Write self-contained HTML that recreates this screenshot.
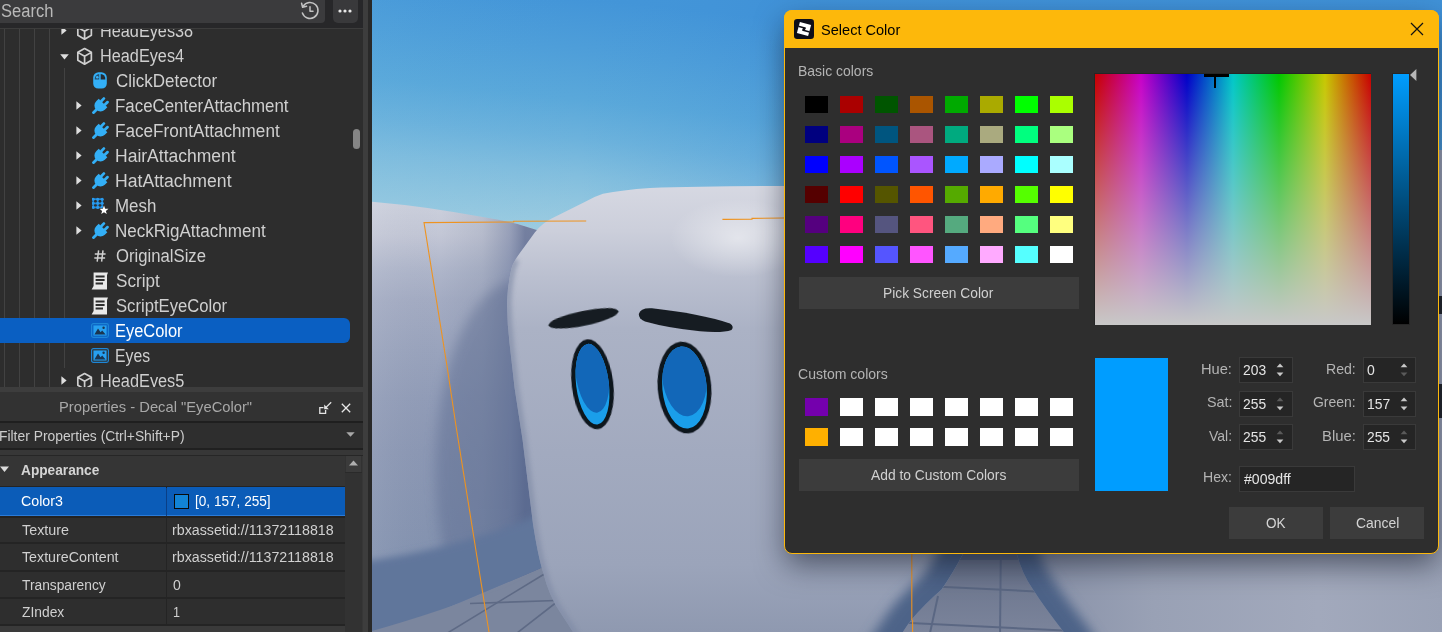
<!DOCTYPE html>
<html lang="en"><head><meta charset="utf-8"><title>Select Color</title>
<style>
*{margin:0;padding:0;box-sizing:border-box}
html,body{width:1442px;height:632px;overflow:hidden;background:#3d3d3d;font-family:"Liberation Sans",sans-serif}
.abs{position:absolute}
.t{position:absolute;white-space:pre;line-height:normal;transform-origin:0 0;display:inline-block}
#left{position:absolute;left:0;top:0;width:372px;height:632px;background:#3d3d3d;overflow:hidden}
#tree{position:absolute;left:0;top:29px;width:363px;height:358px;background:#2d2d2d;overflow:hidden}
#dlg{position:absolute;left:784px;top:10px;width:655px;height:544px;background:#2e2e2e;border:1px solid #fdb80b;border-radius:8px;box-shadow:0 12px 30px -2px rgba(8,12,28,.55);overflow:hidden}
.btn{position:absolute;background:#3c3c3c}
.sw{position:absolute;width:23px;height:17px}
.spin{position:absolute;width:54px;height:26px;background:#252525;border:1px solid #3a3a3a}
</style></head>
<body>
<svg class="abs" style="left:372px;top:0" width="1070" height="632" viewBox="372 0 1070 632">
<defs>
<linearGradient id="sky" gradientUnits="userSpaceOnUse" x1="600" y1="0" x2="574" y2="240">
<stop offset="0" stop-color="#4395d8"/><stop offset=".21" stop-color="#4e9ed9"/><stop offset=".42" stop-color="#5aa8da"/><stop offset=".58" stop-color="#6cb2dc"/><stop offset=".73" stop-color="#82bede"/><stop offset=".84" stop-color="#8fc5df"/><stop offset="1" stop-color="#a0cee1"/>
</linearGradient>
<linearGradient id="skyx" gradientUnits="userSpaceOnUse" x1="372" y1="0" x2="784" y2="0">
<stop offset="0" stop-color="#5fb0e0" stop-opacity=".12"/><stop offset=".5" stop-color="#4a9ddc" stop-opacity="0"/><stop offset="1" stop-color="#2f7fd6" stop-opacity=".15"/>
</linearGradient>
<linearGradient id="lb" gradientUnits="userSpaceOnUse" x1="0" y1="200" x2="0" y2="560">
<stop offset="0" stop-color="#cdd1dd"/><stop offset=".1" stop-color="#c2c6d5"/><stop offset=".19" stop-color="#afb6ca"/><stop offset=".28" stop-color="#a3abc2"/><stop offset=".42" stop-color="#99a3bc"/><stop offset=".55" stop-color="#919cb7"/><stop offset=".7" stop-color="#8b97b3"/><stop offset="1" stop-color="#8392af"/>
</linearGradient>
<linearGradient id="lbx" gradientUnits="userSpaceOnUse" x1="372" y1="0" x2="525" y2="0">
<stop offset="0" stop-color="#ffffff" stop-opacity=".07"/><stop offset=".45" stop-color="#65738f" stop-opacity="0"/><stop offset=".72" stop-color="#65738f" stop-opacity=".14"/><stop offset=".9" stop-color="#596890" stop-opacity=".42"/><stop offset="1" stop-color="#4e5d86" stop-opacity=".68"/>
</linearGradient>
<linearGradient id="hd" gradientUnits="userSpaceOnUse" x1="0" y1="186" x2="0" y2="632">
<stop offset="0" stop-color="#d6d8e2"/><stop offset=".1" stop-color="#cccfdb"/><stop offset=".2" stop-color="#bbc0d0"/><stop offset=".32" stop-color="#abb2c5"/><stop offset=".6" stop-color="#a2aabf"/><stop offset=".85" stop-color="#9ba4ba"/><stop offset="1" stop-color="#8f99b0"/>
</linearGradient>
<radialGradient id="hl" gradientUnits="userSpaceOnUse" cx="738" cy="238" r="68" gradientTransform="translate(0 99.960) scale(1 .58)">
<stop offset="0" stop-color="#ffffff" stop-opacity=".48"/><stop offset="1" stop-color="#ffffff" stop-opacity="0"/>
</radialGradient>
<linearGradient id="ro" gradientUnits="userSpaceOnUse" x1="1030" y1="0" x2="1442" y2="0">
<stop offset="0" stop-color="#8891a8"/><stop offset=".3" stop-color="#99a1b5"/><stop offset=".7" stop-color="#a2a9bc"/><stop offset="1" stop-color="#9aa2b6"/>
</linearGradient>
<linearGradient id="fl" gradientUnits="userSpaceOnUse" x1="0" y1="554" x2="0" y2="632">
<stop offset="0" stop-color="#677189"/><stop offset="1" stop-color="#7b849b"/>
</linearGradient>
<filter id="b2" x="-60%" y="-60%" width="220%" height="220%"><feGaussianBlur stdDeviation="2"/></filter>
<filter id="b3" x="-60%" y="-60%" width="220%" height="220%"><feGaussianBlur stdDeviation="3.500"/></filter>
<filter id="b6" x="-60%" y="-60%" width="220%" height="220%"><feGaussianBlur stdDeviation="6"/></filter>
<filter id="b1"><feGaussianBlur stdDeviation=".6"/></filter>
<clipPath id="cpLB"><path d="M372 201.700 L404.600 205 Q430 208 453.500 212 L498.500 219.700 L517.500 224 L540 231 L560 560 L372 640 Z"/></clipPath>
<path id="hdp" d="M1000 186 L784 186 Q700 186.300 650 188 Q622 190 603 193.700 Q596 196 587.700 200.400 L568.700 209.900 L551.600 218.400 Q545 222 542 225 Q538 228 534.600 232.700 L525 246 Q519 254 515.600 259.200 Q512.500 264 511.400 268.700 Q507.600 285 507 302.700 Q507.200 325 509.800 345.400 L514.600 388 L522.600 440 L533 524 Q538 556 543 572 Q549 596 560 612 Q568 624 578 640 L898 640 Q905 628 911.600 619.600 Q925 604 941.600 589.600 Q953 573 963.500 553 L1000 553 Z"/>
<clipPath id="cpHD"><use href="#hdp"/></clipPath>
<clipPath id="cpRO"><path id="rop" d="M1016.500 553 Q1022 574 1033 589.600 Q1046 610 1070 640 L1442 640 L1442 150 L1016.500 150 Z"/></clipPath>
<clipPath id="cpE1"><ellipse cx="592.500" cy="384.200" rx="16.400" ry="40.600"/></clipPath>
<clipPath id="cpE2"><ellipse cx="684.500" cy="387.500" rx="22.200" ry="41.200"/></clipPath>
</defs>
<!-- sky -->
<rect x="372" y="0" width="1070" height="632" fill="url(#sky)"/>
<rect x="372" y="0" width="1070" height="240" fill="url(#skyx)"/>
<!-- floor -->
<rect x="372" y="480" width="230" height="152" fill="#7b869e"/>
<rect x="880" y="540" width="220" height="92" fill="url(#fl)"/>
<rect x="960" y="553" width="60" height="7" fill="#566380" filter="url(#b1)"/>
<g stroke="#586581" stroke-width="2" fill="none" opacity=".9">
<path d="M1000.800 553 L1000 640"/><path d="M940 586.800 L1036 591.500"/><path d="M900 622.500 L1064 630.500"/><path d="M938 596 L928.500 640"/>
</g>
<!-- left block -->
<g clip-path="url(#cpLB)">
<rect x="372" y="190" width="200" height="450" fill="url(#lb)"/>
<rect x="372" y="190" width="200" height="450" fill="url(#lbx)"/>
<ellipse cx="520" cy="470" rx="85" ry="190" fill="#56668c" opacity=".42" filter="url(#b6)"/>
<!-- dark band -->
<path d="M360 562 Q460 549 545 512 L560 600 L360 660 Z" fill="#61769b" filter="url(#b3)"/>
</g>
<!-- floor wedge bottom-left over the block -->
<path d="M372 631 Q404 622 440 610 Q480 596 502 589 Q524 579 545 566 L575 640 L372 640 Z" fill="#7b869e"/>
<g stroke="#5e6a85" stroke-width="1.600" fill="none">
<path d="M436 640 L546 573"/><path d="M470 603.500 L556 600.500"/><path d="M508 640 L562 598"/>
</g>
<!-- right object under dialog -->
<g clip-path="url(#cpRO)">
<rect x="1000" y="150" width="450" height="500" fill="url(#ro)"/>
<path d="M1010 530 L1016.500 553 Q1022 574 1033 589.600 Q1046 610 1070 640 L1080 655" fill="none" stroke="#4d6388" stroke-width="44" filter="url(#b6)"/>
</g>
<!-- head -->
<g clip-path="url(#cpHD)">
<rect x="372" y="150" width="640" height="500" fill="url(#hd)"/>
<ellipse cx="738" cy="238" rx="80" ry="46" fill="url(#hl)"/>
<!-- left rim shading -->
<path d="M515.600 259.200 Q512.500 264 511.400 268.700 Q507.600 285 507 302.700 Q507.200 325 509.800 345.400 L514.600 388 L522.600 440 L533 524 Q538 556 543 572 Q549 596 560 612 Q568 624 578 640" fill="none" stroke="#7f8aa5" stroke-width="9" opacity=".6" filter="url(#b2)"/>
<!-- bottom right rim -->
<path d="M884 660 Q905 628 911.600 619.600 Q925 604 941.600 589.600 Q953 573 963.500 553 L975 530" fill="none" stroke="#4d6388" stroke-width="46" filter="url(#b6)"/>
<path d="M560 648 L880 648" stroke="#7f8aa3" stroke-width="30" opacity=".45" filter="url(#b3)"/>
</g>
<!-- eyebrows -->
<ellipse cx="583.500" cy="318.300" rx="35.600" ry="7.400" fill="#161b21" transform="rotate(-11.500 583.500 318.300)" filter="url(#b1)"/>
<path d="M638.800 314 Q640.500 307.500 652 308.300 Q700 313.500 730 323.500 Q734.500 326.500 731.500 330 Q722 333.300 700 331.300 Q668 328 645 321.500 Q638.500 318.500 638.800 314 Z" fill="#161b21" filter="url(#b1)"/>
<!-- eyes -->
<g transform="rotate(-7 592.500 384.200)">
<ellipse cx="592.500" cy="384.200" rx="20.800" ry="45.200" fill="#10141c" filter="url(#b1)"/>
<g clip-path="url(#cpE1)"><rect x="560" y="330" width="70" height="110" fill="#1a9eea"/>
<ellipse cx="593.600" cy="371.500" rx="16.800" ry="41.500" fill="#1267b8"/></g>
</g>
<g transform="rotate(-5 684.500 387.500)">
<ellipse cx="684.500" cy="387.500" rx="26.800" ry="46" fill="#10141c" filter="url(#b1)"/>
<g clip-path="url(#cpE2)"><rect x="650" y="330" width="70" height="110" fill="#1a9eea"/>
<ellipse cx="685.600" cy="374" rx="22.600" ry="42.500" fill="#1267b8"/></g>
</g>
<!-- selection outline -->
<g stroke="#ee9320" stroke-width="1.100" fill="none">
<path d="M586.200 221 L513.700 221.300 L513.700 222 L424 222.600 L447 366 L456 426 L489 632"/>
<path d="M722.400 219.400 L752 219.200 L752 218.400 L784 218"/>
<path d="M911.800 554 V620 M912.600 620 V632"/>
</g>
<!-- right strip marks -->
<rect x="1439" y="296" width="3" height="18" fill="#23262c"/>
<rect x="1439" y="384" width="3" height="34" fill="#23262c"/>
</svg>

<div id="left">
<div class="abs" style="left:0px;top:0px;width:363px;height:29px;background:#272729;"></div>
<div class="abs" style="left:0px;top:0px;width:325px;height:23px;background:#3b3b3d;border-radius:0 0 4px 0"></div>
<div class="abs" style="left:333px;top:0px;width:25px;height:23px;background:#39393b;border-radius:0 0 5px 5px"></div>
<div class="abs" style="left:0px;top:28px;width:363px;height:1px;background:#3c3c3c;"></div>
<svg class="abs" style="left:299px;top:0px" width="22" height="22" viewBox="0 0 22 22"><g fill="none" stroke="#c4c4c4" stroke-width="1.5" stroke-linecap="round" stroke-linejoin="round"><path d="M4.2 6.2 A8 8 0 1 1 3.4 13"/><path d="M2.6 3.2 L3.6 7.3 L7.6 6.2"/><path d="M11 6.8 V11.2 H14"/></g></svg>
<svg class="abs" style="left:337px;top:8px" width="16" height="6" viewBox="0 0 16 6"><circle cx="3" cy="3" r="1.6" fill="#e8e8e8"/><circle cx="8" cy="3" r="1.6" fill="#e8e8e8"/><circle cx="13" cy="3" r="1.6" fill="#e8e8e8"/></svg>
<div id="tree">
<div class="abs" style="left:4px;top:0px;width:1px;height:359px;background:#424242;"></div>
<div class="abs" style="left:19px;top:0px;width:1px;height:359px;background:#424242;"></div>
<div class="abs" style="left:34px;top:0px;width:1px;height:359px;background:#424242;"></div>
<div class="abs" style="left:49px;top:0px;width:1px;height:359px;background:#424242;"></div>
<div class="abs" style="left:64px;top:39px;width:1px;height:300px;background:#424242;"></div>
<div class="abs" style="left:0px;top:289px;width:350px;height:25px;background:#0a5fc2;border-radius:0 6px 6px 0"></div>
<svg class="abs" style="left:61.2px;top:-2.8px" width="6" height="9" viewBox="0 0 6 9"><path d="M0.4 0.3 L5.6 4.5 L0.4 8.7 Z" fill="#dedede"/></svg>
<svg class="abs" style="left:76.4px;top:-7.4px" width="17.2" height="18.8" viewBox="0 0 18 20"><path d="M9 1.6 L16.2 5.7 V14.1 L9 18.3 L1.8 14.1 V5.7 Z M1.8 5.7 L9 9.9 L16.2 5.7 M9 9.9 V18.3" fill="none" stroke="#cfcfcf" stroke-width="1.8" stroke-linejoin="round" stroke-linecap="round"/></svg>
<svg class="abs" style="left:59.5px;top:24.5px" width="9" height="6" viewBox="0 0 9 6"><path d="M0.2 0.3 H8.8 L4.5 5.6 Z" fill="#dedede"/></svg>
<svg class="abs" style="left:76.4px;top:17.6px" width="17.2" height="18.8" viewBox="0 0 18 20"><path d="M9 1.6 L16.2 5.7 V14.1 L9 18.3 L1.8 14.1 V5.7 Z M1.8 5.7 L9 9.9 L16.2 5.7 M9 9.9 V18.3" fill="none" stroke="#cfcfcf" stroke-width="1.8" stroke-linejoin="round" stroke-linecap="round"/></svg>
<svg class="abs" style="left:92.5px;top:42.900000000000006px" width="14" height="17" viewBox="0 0 14 17"><path d="M0.2 5.6 A5.4 5.4 0 0 1 5.6 0.2 H8.4 A5.4 5.4 0 0 1 13.800 5.6 V11.600 A5 5 0 0 1 8.800 16.600 H5.2 A5 5 0 0 1 0.2 11.600 Z" fill="#33aff6"/><path d="M7.700 1.900 A4.600 5.200 0 0 1 12.300 7.600 H7.700 Z" fill="#252b33"/><path d="M6.200 1.900 A4.600 5.200 0 0 0 1.700 7.600 H6.200 Z" fill="#27506f"/><circle cx="4.300" cy="5.300" r="1.300" fill="#39b4f8"/></svg>
<svg class="abs" style="left:76.2px;top:72.2px" width="6" height="9" viewBox="0 0 6 9"><path d="M0.4 0.3 L5.6 4.5 L0.4 8.7 Z" fill="#dedede"/></svg>
<svg class="abs" style="left:91px;top:68.2px" width="18" height="18" viewBox="0 0 18 18" overflow="visible"><g transform="rotate(45 9 9)" fill="#33aff6"><rect x="5.1" y="-0.4" width="2.7" height="6" rx="1.2"/><rect x="10.2" y="-0.4" width="2.7" height="6" rx="1.2"/><path d="M2.9 4.7 H15.1 V8.3 A6.1 6.1 0 0 1 2.9 8.3 Z"/><rect x="7.6" y="13" width="2.8" height="6.6" rx="1.2"/></g></svg>
<svg class="abs" style="left:76.2px;top:97.2px" width="6" height="9" viewBox="0 0 6 9"><path d="M0.4 0.3 L5.6 4.5 L0.4 8.7 Z" fill="#dedede"/></svg>
<svg class="abs" style="left:91px;top:93.19999999999999px" width="18" height="18" viewBox="0 0 18 18" overflow="visible"><g transform="rotate(45 9 9)" fill="#33aff6"><rect x="5.1" y="-0.4" width="2.7" height="6" rx="1.2"/><rect x="10.2" y="-0.4" width="2.7" height="6" rx="1.2"/><path d="M2.9 4.7 H15.1 V8.3 A6.1 6.1 0 0 1 2.9 8.3 Z"/><rect x="7.6" y="13" width="2.8" height="6.6" rx="1.2"/></g></svg>
<svg class="abs" style="left:76.2px;top:122.2px" width="6" height="9" viewBox="0 0 6 9"><path d="M0.4 0.3 L5.6 4.5 L0.4 8.7 Z" fill="#dedede"/></svg>
<svg class="abs" style="left:91px;top:118.19999999999999px" width="18" height="18" viewBox="0 0 18 18" overflow="visible"><g transform="rotate(45 9 9)" fill="#33aff6"><rect x="5.1" y="-0.4" width="2.7" height="6" rx="1.2"/><rect x="10.2" y="-0.4" width="2.7" height="6" rx="1.2"/><path d="M2.9 4.7 H15.1 V8.3 A6.1 6.1 0 0 1 2.9 8.3 Z"/><rect x="7.6" y="13" width="2.8" height="6.6" rx="1.2"/></g></svg>
<svg class="abs" style="left:76.2px;top:147.2px" width="6" height="9" viewBox="0 0 6 9"><path d="M0.4 0.3 L5.6 4.5 L0.4 8.7 Z" fill="#dedede"/></svg>
<svg class="abs" style="left:91px;top:143.2px" width="18" height="18" viewBox="0 0 18 18" overflow="visible"><g transform="rotate(45 9 9)" fill="#33aff6"><rect x="5.1" y="-0.4" width="2.7" height="6" rx="1.2"/><rect x="10.2" y="-0.4" width="2.7" height="6" rx="1.2"/><path d="M2.9 4.7 H15.1 V8.3 A6.1 6.1 0 0 1 2.9 8.3 Z"/><rect x="7.6" y="13" width="2.8" height="6.6" rx="1.2"/></g></svg>
<svg class="abs" style="left:76.2px;top:197.2px" width="6" height="9" viewBox="0 0 6 9"><path d="M0.4 0.3 L5.6 4.5 L0.4 8.7 Z" fill="#dedede"/></svg>
<svg class="abs" style="left:91px;top:193.2px" width="18" height="18" viewBox="0 0 18 18" overflow="visible"><g transform="rotate(45 9 9)" fill="#33aff6"><rect x="5.1" y="-0.4" width="2.7" height="6" rx="1.2"/><rect x="10.2" y="-0.4" width="2.7" height="6" rx="1.2"/><path d="M2.9 4.7 H15.1 V8.3 A6.1 6.1 0 0 1 2.9 8.3 Z"/><rect x="7.6" y="13" width="2.8" height="6.6" rx="1.2"/></g></svg>
<svg class="abs" style="left:76.2px;top:172.2px" width="6" height="9" viewBox="0 0 6 9"><path d="M0.4 0.3 L5.6 4.5 L0.4 8.7 Z" fill="#dedede"/></svg>
<svg class="abs" style="left:92px;top:168.2px" width="18" height="19" viewBox="0 0 18 19"><path d="M1.2 2.2 H10.2 M1.2 6.3 H10.2 M1.2 10.4 H10.2 M1.2 2.2 V10.4 M5.7 2.2 V10.4 M10.2 2.2 V10.4" stroke="#1f84d0" stroke-width="1.7" fill="none"/><g fill="#2a9bee"><circle cx="1.2" cy="2.2" r="1.55"/><circle cx="1.2" cy="6.3" r="1.55"/><circle cx="1.2" cy="10.4" r="1.55"/><circle cx="5.7" cy="2.2" r="1.55"/><circle cx="5.7" cy="6.3" r="1.55"/><circle cx="5.7" cy="10.4" r="1.55"/><circle cx="10.2" cy="2.2" r="1.55"/><circle cx="10.2" cy="6.3" r="1.55"/><circle cx="10.2" cy="10.4" r="1.55"/></g><path d="M12.00 8.60 L13.18 11.68 L16.47 11.85 L13.90 13.92 L14.76 17.10 L12.00 15.30 L9.24 17.10 L10.10 13.92 L7.53 11.85 L10.82 11.68 Z" fill="#ffffff" stroke="#2d2d2d" stroke-width="0.9" paint-order="stroke"/></svg>
<svg class="abs" style="left:94px;top:221.2px" width="12" height="12" viewBox="0 0 12 12"><path d="M4.6 0.4 L3.2 11.6 M9 0.4 L7.6 11.6 M0.8 4 H11.6 M0.3 8 H11.1" stroke="#d0d0d0" stroke-width="1.5" fill="none"/></svg>
<svg class="abs" style="left:91px;top:243.0px" width="18" height="18" viewBox="0 0 18 18"><path d="M2.6 0.6 H17 L16 3 V17.4 H0.6 L2.6 14 Z" fill="#e9e9e9"/><path d="M4.6 4.6 H13.6 M4.6 8 H13.6 M4.6 11.4 H12" stroke="#2d2d2d" stroke-width="2" fill="none"/></svg>
<svg class="abs" style="left:91px;top:268.0px" width="18" height="18" viewBox="0 0 18 18"><path d="M2.6 0.6 H17 L16 3 V17.4 H0.6 L2.6 14 Z" fill="#e9e9e9"/><path d="M4.6 4.6 H13.6 M4.6 8 H13.6 M4.6 11.4 H12" stroke="#2d2d2d" stroke-width="2" fill="none"/></svg>
<svg class="abs" style="left:91.2px;top:294.3px" width="18" height="15" viewBox="0 0 18 15"><rect x="0.6" y="0.6" width="16.8" height="13.8" rx="1.8" fill="none" stroke="#1e86d6" stroke-width="1.2"/><rect x="2.4" y="2.4" width="13.2" height="10.2" fill="#27a0f0"/><path d="M3.4 11.6 L7 5.6 L9.6 9.2 L11.2 7.6 L14.6 11.6 Z" fill="#1b3550"/><circle cx="12.6" cy="4.8" r="1.2" fill="#1b3550"/></svg>
<svg class="abs" style="left:91.2px;top:319.3px" width="18" height="15" viewBox="0 0 18 15"><rect x="0.6" y="0.6" width="16.8" height="13.8" rx="1.8" fill="none" stroke="#1e86d6" stroke-width="1.2"/><rect x="2.4" y="2.4" width="13.2" height="10.2" fill="#27a0f0"/><path d="M3.4 11.6 L7 5.6 L9.6 9.2 L11.2 7.6 L14.6 11.6 Z" fill="#1b3550"/><circle cx="12.6" cy="4.8" r="1.2" fill="#1b3550"/></svg>
<svg class="abs" style="left:61.2px;top:347.2px" width="6" height="9" viewBox="0 0 6 9"><path d="M0.4 0.3 L5.6 4.5 L0.4 8.7 Z" fill="#dedede"/></svg>
<svg class="abs" style="left:76.4px;top:342.6px" width="17.2" height="18.8" viewBox="0 0 18 20"><path d="M9 1.6 L16.2 5.7 V14.1 L9 18.3 L1.8 14.1 V5.7 Z M1.8 5.7 L9 9.9 L16.2 5.7 M9 9.9 V18.3" fill="none" stroke="#cfcfcf" stroke-width="1.8" stroke-linejoin="round" stroke-linecap="round"/></svg>
<span class="t" id="t1" style="left:100.33px;top:-8.09px;font-size:18px;color:#cfcfcf;font-weight:400;transform:scaleX(0.9036)">HeadEyes38</span>
<span class="t" id="t2" style="left:100.33px;top:16.91px;font-size:18px;color:#cfcfcf;font-weight:400;transform:scaleX(0.9035)">HeadEyes4</span>
<span class="t" id="t3" style="left:115.80px;top:41.91px;font-size:18px;color:#cfcfcf;font-weight:400;transform:scaleX(0.9445)">ClickDetector</span>
<span class="t" id="t4" style="left:115.28px;top:66.91px;font-size:18px;color:#cfcfcf;font-weight:400;transform:scaleX(0.9377)">FaceCenterAttachment</span>
<span class="t" id="t5" style="left:115.26px;top:91.91px;font-size:18px;color:#cfcfcf;font-weight:400;transform:scaleX(0.9515)">FaceFrontAttachment</span>
<span class="t" id="t6" style="left:115.23px;top:116.91px;font-size:18px;color:#cfcfcf;font-weight:400;transform:scaleX(0.9731)">HairAttachment</span>
<span class="t" id="t7" style="left:115.22px;top:141.91px;font-size:18px;color:#cfcfcf;font-weight:400;transform:scaleX(0.9787)">HatAttachment</span>
<span class="t" id="t8" style="left:115.28px;top:166.91px;font-size:18px;color:#cfcfcf;font-weight:400;transform:scaleX(0.9399)">Mesh</span>
<span class="t" id="t9" style="left:115.27px;top:191.91px;font-size:18px;color:#cfcfcf;font-weight:400;transform:scaleX(0.9472)">NeckRigAttachment</span>
<span class="t" id="t10" style="left:115.82px;top:216.91px;font-size:18px;color:#cfcfcf;font-weight:400;transform:scaleX(0.9270)">OriginalSize</span>
<span class="t" id="t11" style="left:116.06px;top:241.91px;font-size:18px;color:#cfcfcf;font-weight:400;transform:scaleX(0.9514)">Script</span>
<span class="t" id="t12" style="left:116.08px;top:266.91px;font-size:18px;color:#cfcfcf;font-weight:400;transform:scaleX(0.9247)">ScriptEyeColor</span>
<span class="t" id="t13" style="left:115.32px;top:291.91px;font-size:18px;color:#ffffff;font-weight:400;transform:scaleX(0.9126)">EyeColor</span>
<span class="t" id="t14" style="left:115.37px;top:316.91px;font-size:18px;color:#cfcfcf;font-weight:400;transform:scaleX(0.8752)">Eyes</span>
<span class="t" id="t15" style="left:100.33px;top:341.91px;font-size:18px;color:#cfcfcf;font-weight:400;transform:scaleX(0.9063)">HeadEyes5</span>
<div class="abs" style="left:353px;top:99.5px;width:7px;height:20px;background:#858585;border-radius:3.5px"></div>
</div>
<div class="abs" style="left:0px;top:392px;width:363px;height:29px;background:#323232;"></div>
<div class="abs" style="left:0px;top:421px;width:363px;height:2px;background:#1f1f1f;"></div>
<div class="abs" style="left:0px;top:423px;width:363px;height:25px;background:#2e2e2e;"></div>
<div class="abs" style="left:0px;top:448px;width:363px;height:2px;background:#202020;"></div>
<div class="abs" style="left:0px;top:450px;width:363px;height:182px;background:#373737;"></div>
<div class="abs" style="left:0px;top:454.5px;width:363px;height:1.5px;background:#262626;"></div>
<div class="abs" style="left:0px;top:456px;width:345px;height:29.5px;background:#353535;"></div>
<div class="abs" style="left:0px;top:485.5px;width:345px;height:1.5px;background:#242424;"></div>
<div class="abs" style="left:0px;top:487px;width:345px;height:28.5px;background:#0b5cb8;"></div>
<div class="abs" style="left:0px;top:515px;width:345px;height:1px;background:#2b7bd8;"></div>
<div class="abs" style="left:0px;top:516px;width:345px;height:1.5px;background:#222;"></div>
<div class="abs" style="left:0px;top:517.5px;width:345px;height:24.5px;background:#2e2e2e;"></div>
<div class="abs" style="left:0px;top:542px;width:345px;height:1.5px;background:#242424;"></div>
<div class="abs" style="left:0px;top:543.5px;width:345px;height:26.5px;background:#2e2e2e;"></div>
<div class="abs" style="left:0px;top:570px;width:345px;height:1.5px;background:#242424;"></div>
<div class="abs" style="left:0px;top:571.5px;width:345px;height:25.5px;background:#2e2e2e;"></div>
<div class="abs" style="left:0px;top:597px;width:345px;height:1.5px;background:#242424;"></div>
<div class="abs" style="left:0px;top:598.5px;width:345px;height:25.5px;background:#2e2e2e;"></div>
<div class="abs" style="left:0px;top:624px;width:345px;height:1.5px;background:#242424;"></div>
<div class="abs" style="left:0px;top:625.5px;width:345px;height:7px;background:#3a3a3a;"></div>
<div class="abs" style="left:166px;top:487px;width:1.2px;height:138px;background:#242424;"></div>
<div class="abs" style="left:166px;top:487.5px;width:1.2px;height:28px;background:#0a3f86;"></div>
<div class="abs" style="left:173.5px;top:494px;width:15px;height:15px;background:#1283d6;border:1px solid #0a0a0a"></div>
<div class="abs" style="left:345px;top:456px;width:17px;height:176px;background:#323232;"></div>
<div class="abs" style="left:346px;top:456px;width:15px;height:16px;background:#3b3b3b;"></div>
<div class="abs" style="left:345px;top:472px;width:17px;height:1px;background:#2a2a2a;"></div>
<svg class="abs" style="left:349px;top:460px" width="9" height="6" viewBox="0 0 9 6"><path d="M0 5.5 L4.5 0.5 L9 5.5 Z" fill="#b0b0b0"/></svg>
<svg class="abs" style="left:317px;top:400px" width="16" height="16" viewBox="0 0 16 16"><g fill="none" stroke="#e4e4e4" stroke-width="1.3"><path d="M6.5 7.6 H2.8 V13.4 H8.6 V10"/><path d="M14.2 2.2 L8 8.4"/></g><path d="M7.2 4.6 V9.2 H11.8 Z" fill="#e4e4e4"/></svg>
<svg class="abs" style="left:341px;top:403px" width="10" height="10" viewBox="0 0 10 10"><path d="M0.8 0.8 L9.2 9.2 M9.2 0.8 L0.8 9.2" stroke="#e8e8e8" stroke-width="1.3" fill="none"/></svg>
<svg class="abs" style="left:346px;top:432px" width="9" height="5" viewBox="0 0 9 5"><path d="M0.3 0.3 H8.7 L4.5 4.8 Z" fill="#a8a8a8"/></svg>
<svg class="abs" style="left:0px;top:466px" width="10" height="7" viewBox="0 0 10 7"><path d="M0 0.5 H9 L4.5 6 Z" fill="#dcdcdc"/></svg>
<div class="abs" style="left:363px;top:0px;width:5px;height:632px;background:#3d3d3d;"></div>
<div class="abs" style="left:368px;top:0px;width:4px;height:632px;background:#292929;"></div>
</div>
<div id="dlg"></div>
<div class="abs" style="left:784px;top:10px;width:655px;height:38px;background:#fdb80b;border-radius:8px 8px 0 0"></div>
<svg class="abs" style="left:794px;top:19px" width="20" height="20" viewBox="0 0 20 20"><rect width="20" height="20" rx="3.2" fill="#0e0e18"/><g transform="rotate(15 10 10)"><rect x="4.2" y="4.2" width="11.6" height="11.6" fill="#ffffff"/><rect x="3.8" y="8.1" width="7.6" height="1.5" fill="#0e0e18"/><rect x="8.6" y="10.6" width="7.6" height="1.5" fill="#0e0e18"/><rect x="8.7" y="8.7" width="2.6" height="2.6" fill="#0e0e18"/></g></svg>
<svg class="abs" style="left:1410px;top:22px" width="14" height="14" viewBox="0 0 14 14"><path d="M1 1 L13 13 M13 1 L1 13" stroke="#111" stroke-width="1.2" fill="none"/></svg>
<div class="sw" style="left:805px;top:96px;background:rgb(0,0,0)"></div>
<div class="sw" style="left:805px;top:126px;background:rgb(0,0,127)"></div>
<div class="sw" style="left:805px;top:156px;background:rgb(0,0,255)"></div>
<div class="sw" style="left:805px;top:186px;background:rgb(85,0,0)"></div>
<div class="sw" style="left:805px;top:216px;background:rgb(85,0,127)"></div>
<div class="sw" style="left:805px;top:246px;background:rgb(85,0,255)"></div>
<div class="sw" style="left:840px;top:96px;background:rgb(170,0,0)"></div>
<div class="sw" style="left:840px;top:126px;background:rgb(170,0,127)"></div>
<div class="sw" style="left:840px;top:156px;background:rgb(170,0,255)"></div>
<div class="sw" style="left:840px;top:186px;background:rgb(255,0,0)"></div>
<div class="sw" style="left:840px;top:216px;background:rgb(255,0,127)"></div>
<div class="sw" style="left:840px;top:246px;background:rgb(255,0,255)"></div>
<div class="sw" style="left:875px;top:96px;background:rgb(0,85,0)"></div>
<div class="sw" style="left:875px;top:126px;background:rgb(0,85,127)"></div>
<div class="sw" style="left:875px;top:156px;background:rgb(0,85,255)"></div>
<div class="sw" style="left:875px;top:186px;background:rgb(85,85,0)"></div>
<div class="sw" style="left:875px;top:216px;background:rgb(85,85,127)"></div>
<div class="sw" style="left:875px;top:246px;background:rgb(85,85,255)"></div>
<div class="sw" style="left:910px;top:96px;background:rgb(170,85,0)"></div>
<div class="sw" style="left:910px;top:126px;background:rgb(170,85,127)"></div>
<div class="sw" style="left:910px;top:156px;background:rgb(170,85,255)"></div>
<div class="sw" style="left:910px;top:186px;background:rgb(255,85,0)"></div>
<div class="sw" style="left:910px;top:216px;background:rgb(255,85,127)"></div>
<div class="sw" style="left:910px;top:246px;background:rgb(255,85,255)"></div>
<div class="sw" style="left:945px;top:96px;background:rgb(0,170,0)"></div>
<div class="sw" style="left:945px;top:126px;background:rgb(0,170,127)"></div>
<div class="sw" style="left:945px;top:156px;background:rgb(0,170,255)"></div>
<div class="sw" style="left:945px;top:186px;background:rgb(85,170,0)"></div>
<div class="sw" style="left:945px;top:216px;background:rgb(85,170,127)"></div>
<div class="sw" style="left:945px;top:246px;background:rgb(85,170,255)"></div>
<div class="sw" style="left:980px;top:96px;background:rgb(170,170,0)"></div>
<div class="sw" style="left:980px;top:126px;background:rgb(170,170,127)"></div>
<div class="sw" style="left:980px;top:156px;background:rgb(170,170,255)"></div>
<div class="sw" style="left:980px;top:186px;background:rgb(255,170,0)"></div>
<div class="sw" style="left:980px;top:216px;background:rgb(255,170,127)"></div>
<div class="sw" style="left:980px;top:246px;background:rgb(255,170,255)"></div>
<div class="sw" style="left:1015px;top:96px;background:rgb(0,255,0)"></div>
<div class="sw" style="left:1015px;top:126px;background:rgb(0,255,127)"></div>
<div class="sw" style="left:1015px;top:156px;background:rgb(0,255,255)"></div>
<div class="sw" style="left:1015px;top:186px;background:rgb(85,255,0)"></div>
<div class="sw" style="left:1015px;top:216px;background:rgb(85,255,127)"></div>
<div class="sw" style="left:1015px;top:246px;background:rgb(85,255,255)"></div>
<div class="sw" style="left:1050px;top:96px;background:rgb(170,255,0)"></div>
<div class="sw" style="left:1050px;top:126px;background:rgb(170,255,127)"></div>
<div class="sw" style="left:1050px;top:156px;background:rgb(170,255,255)"></div>
<div class="sw" style="left:1050px;top:186px;background:rgb(255,255,0)"></div>
<div class="sw" style="left:1050px;top:216px;background:rgb(255,255,127)"></div>
<div class="sw" style="left:1050px;top:246px;background:rgb(255,255,255)"></div>
<div class="btn" style="left:799px;top:277px;width:280px;height:32px"></div>
<div class="btn" style="left:799px;top:459px;width:280px;height:32px"></div>
<div class="btn" style="left:1229px;top:507px;width:94px;height:32px"></div>
<div class="btn" style="left:1330px;top:507px;width:94px;height:32px"></div>
<div class="sw" style="left:805px;top:398px;height:18px;background:#7400ad"></div>
<div class="sw" style="left:805px;top:428px;height:18px;background:#ffb000"></div>
<div class="sw" style="left:840px;top:398px;height:18px;background:#ffffff"></div>
<div class="sw" style="left:840px;top:428px;height:18px;background:#ffffff"></div>
<div class="sw" style="left:875px;top:398px;height:18px;background:#ffffff"></div>
<div class="sw" style="left:875px;top:428px;height:18px;background:#ffffff"></div>
<div class="sw" style="left:910px;top:398px;height:18px;background:#ffffff"></div>
<div class="sw" style="left:910px;top:428px;height:18px;background:#ffffff"></div>
<div class="sw" style="left:945px;top:398px;height:18px;background:#ffffff"></div>
<div class="sw" style="left:945px;top:428px;height:18px;background:#ffffff"></div>
<div class="sw" style="left:980px;top:398px;height:18px;background:#ffffff"></div>
<div class="sw" style="left:980px;top:428px;height:18px;background:#ffffff"></div>
<div class="sw" style="left:1015px;top:398px;height:18px;background:#ffffff"></div>
<div class="sw" style="left:1015px;top:428px;height:18px;background:#ffffff"></div>
<div class="sw" style="left:1050px;top:398px;height:18px;background:#ffffff"></div>
<div class="sw" style="left:1050px;top:428px;height:18px;background:#ffffff"></div>
<div class="abs" style="left:1094px;top:73px;width:277px;height:252px;background:#262626"></div>
<div class="abs" style="left:1095px;top:74px;width:275.5px;height:250.5px;background:linear-gradient(to bottom,rgba(200,200,200,0),rgb(200,200,200)),linear-gradient(to right,rgb(200,0,0),rgb(200,0,200) 16.67%,rgb(0,0,200) 33.33%,rgb(0,200,200) 50%,rgb(0,200,0) 66.67%,rgb(200,200,0) 83.33%,rgb(200,0,0))"></div>
<div class="abs" style="left:1204px;top:74px;width:24.5px;height:3px;background:#000"></div>
<div class="abs" style="left:1213.6px;top:74px;width:2.8px;height:14px;background:#000"></div>
<div class="abs" style="left:1392px;top:73px;width:18px;height:252px;background:#262626"></div>
<div class="abs" style="left:1393px;top:74px;width:16px;height:250px;background:linear-gradient(to bottom,#009dff,#000)"></div>
<svg class="abs" style="left:1410px;top:69px" width="7" height="12" viewBox="0 0 7 12"><path d="M0 6 L6.4 0 V12 Z" fill="#b6b6b6"/></svg>
<div class="abs" style="left:1095px;top:358px;width:73px;height:133px;background:#009dff"></div>
<div class="spin" style="left:1239px;top:357px"></div>
<svg class="abs" style="left:1276px;top:362.5px" width="8" height="14" viewBox="0 0 8 14"><path d="M0.6 4.2 L4 0.6 L7.4 4.2 Z" fill="#c8c8c8"/><path d="M0.6 9.6 L4 13.2 L7.4 9.6 Z" fill="#c8c8c8"/></svg>
<div class="spin" style="left:1239px;top:391px"></div>
<svg class="abs" style="left:1276px;top:396.5px" width="8" height="14" viewBox="0 0 8 14"><path d="M0.6 4.2 L4 0.6 L7.4 4.2 Z" fill="#5a5a5a"/><path d="M0.6 9.6 L4 13.2 L7.4 9.6 Z" fill="#c8c8c8"/></svg>
<div class="spin" style="left:1239px;top:424.3px"></div>
<svg class="abs" style="left:1276px;top:429.8px" width="8" height="14" viewBox="0 0 8 14"><path d="M0.6 4.2 L4 0.6 L7.4 4.2 Z" fill="#5a5a5a"/><path d="M0.6 9.6 L4 13.2 L7.4 9.6 Z" fill="#c8c8c8"/></svg>
<div class="spin" style="left:1363px;top:357px;width:53px"></div>
<svg class="abs" style="left:1400px;top:362.5px" width="8" height="14" viewBox="0 0 8 14"><path d="M0.6 4.2 L4 0.6 L7.4 4.2 Z" fill="#c8c8c8"/><path d="M0.6 9.6 L4 13.2 L7.4 9.6 Z" fill="#5a5a5a"/></svg>
<div class="spin" style="left:1363px;top:391px;width:53px"></div>
<svg class="abs" style="left:1400px;top:396.5px" width="8" height="14" viewBox="0 0 8 14"><path d="M0.6 4.2 L4 0.6 L7.4 4.2 Z" fill="#c8c8c8"/><path d="M0.6 9.6 L4 13.2 L7.4 9.6 Z" fill="#c8c8c8"/></svg>
<div class="spin" style="left:1363px;top:424.3px;width:53px"></div>
<svg class="abs" style="left:1400px;top:429.8px" width="8" height="14" viewBox="0 0 8 14"><path d="M0.6 4.2 L4 0.6 L7.4 4.2 Z" fill="#5a5a5a"/><path d="M0.6 9.6 L4 13.2 L7.4 9.6 Z" fill="#c8c8c8"/></svg>
<div class="spin" style="left:1239px;top:466px;width:116px;height:26px"></div>
<span class="t" id="t0" style="left:0.78px;top:1.01px;font-size:18px;color:#b9b9b9;font-weight:400;transform:scaleX(0.9178)">Search</span>
<span class="t" id="t16" style="left:58.85px;top:398.79px;font-size:14.6px;color:#a8a8a8;font-weight:400;transform:scaleX(1.0098)">Properties - Decal &quot;EyeColor&quot;</span>
<span class="t" id="t17" style="left:-0.58px;top:428.51px;font-size:13.799999999999999px;color:#cccccc;font-weight:400;transform:scaleX(1.0042)">Filter Properties (Ctrl+Shift+P)</span>
<span class="t" id="t18" style="left:21.19px;top:462.51px;font-size:13.799999999999999px;color:#d4d4d4;font-weight:700;transform:scaleX(0.9918)">Appearance</span>
<span class="t" id="t19" style="left:21.13px;top:493.81px;font-size:13.799999999999999px;color:#ffffff;font-weight:400;transform:scaleX(1.0318)">Color3</span>
<span class="t" id="t20" style="left:21.98px;top:523.01px;font-size:13.799999999999999px;color:#d0d0d0;font-weight:400;transform:scaleX(1.0387)">Texture</span>
<span class="t" id="t21" style="left:21.98px;top:550.01px;font-size:13.799999999999999px;color:#d0d0d0;font-weight:400;transform:scaleX(1.0319)">TextureContent</span>
<span class="t" id="t22" style="left:21.98px;top:578.01px;font-size:13.799999999999999px;color:#d0d0d0;font-weight:400;transform:scaleX(0.9983)">Transparency</span>
<span class="t" id="t23" style="left:21.77px;top:605.31px;font-size:13.799999999999999px;color:#d0d0d0;font-weight:400;transform:scaleX(1.0010)">ZIndex</span>
<span class="t" id="t24" style="left:194.85px;top:493.51px;font-size:13.799999999999999px;color:#ffffff;font-weight:400;transform:scaleX(0.9860)">[0, 157, 255]</span>
<span class="t" id="t25" style="left:172.11px;top:523.31px;font-size:13.799999999999999px;color:#d0d0d0;font-weight:400;transform:scaleX(1.0312)">rbxassetid://11372118818</span>
<span class="t" id="t26" style="left:172.11px;top:550.31px;font-size:13.799999999999999px;color:#d0d0d0;font-weight:400;transform:scaleX(1.0312)">rbxassetid://11372118818</span>
<span class="t" id="t27" style="left:172.86px;top:578.21px;font-size:13.799999999999999px;color:#d0d0d0;font-weight:400;transform:scaleX(1.0145)">0</span>
<span class="t" id="t28" style="left:172.81px;top:605.41px;font-size:13.799999999999999px;color:#d0d0d0;font-weight:400;transform:scaleX(0.9115)">1</span>
<span class="t" id="t29" style="left:820.74px;top:21.59px;font-size:14.6px;color:#000000;font-weight:400;transform:scaleX(0.9975)">Select Color</span>
<span class="t" id="t30" style="left:797.91px;top:63.15px;font-size:14.2px;color:#b4b4b4;font-weight:400;transform:scaleX(0.9841)">Basic colors</span>
<span class="t" id="t31" style="left:883.22px;top:285.15px;font-size:14.2px;color:#d0d0d0;font-weight:400;transform:scaleX(0.9710)">Pick Screen Color</span>
<span class="t" id="t32" style="left:798.34px;top:365.75px;font-size:14.2px;color:#b4b4b4;font-weight:400;transform:scaleX(0.9907)">Custom colors</span>
<span class="t" id="t33" style="left:871.00px;top:467.15px;font-size:14.2px;color:#d0d0d0;font-weight:400;transform:scaleX(0.9750)">Add to Custom Colors</span>
<span class="t" id="t34" style="left:1201.15px;top:360.85px;font-size:14.2px;color:#b4b4b4;font-weight:400;transform:scaleX(1.0325)">Hue:</span>
<span class="t" id="t35" style="left:1206.55px;top:394.45px;font-size:14.2px;color:#b4b4b4;font-weight:400;transform:scaleX(1.0114)">Sat:</span>
<span class="t" id="t36" style="left:1209.00px;top:428.15px;font-size:14.2px;color:#b4b4b4;font-weight:400;transform:scaleX(0.9850)">Val:</span>
<span class="t" id="t37" style="left:1203.10px;top:468.95px;font-size:14.2px;color:#b4b4b4;font-weight:400;transform:scaleX(0.9923)">Hex:</span>
<span class="t" id="t38" style="left:1326.40px;top:360.85px;font-size:14.2px;color:#b4b4b4;font-weight:400;transform:scaleX(0.9927)">Red:</span>
<span class="t" id="t39" style="left:1313.45px;top:394.45px;font-size:14.2px;color:#b4b4b4;font-weight:400;transform:scaleX(0.9840)">Green:</span>
<span class="t" id="t40" style="left:1322.34px;top:428.15px;font-size:14.2px;color:#b4b4b4;font-weight:400;transform:scaleX(1.0476)">Blue:</span>
<span class="t" id="t41" style="left:1243.35px;top:362.15px;font-size:14.2px;color:#e4e4e4;font-weight:400;transform:scaleX(0.9755)">203</span>
<span class="t" id="t42" style="left:1243.35px;top:395.95px;font-size:14.2px;color:#e4e4e4;font-weight:400;transform:scaleX(0.9755)">255</span>
<span class="t" id="t43" style="left:1243.35px;top:429.35px;font-size:14.2px;color:#e4e4e4;font-weight:400;transform:scaleX(0.9755)">255</span>
<span class="t" id="t44" style="left:1367.36px;top:362.15px;font-size:14.2px;color:#e4e4e4;font-weight:400;transform:scaleX(0.9859)">0</span>
<span class="t" id="t45" style="left:1366.93px;top:395.95px;font-size:14.2px;color:#e4e4e4;font-weight:400;transform:scaleX(0.9807)">157</span>
<span class="t" id="t46" style="left:1367.15px;top:429.35px;font-size:14.2px;color:#e4e4e4;font-weight:400;transform:scaleX(0.9710)">255</span>
<span class="t" id="t47" style="left:1244.00px;top:471.15px;font-size:14.2px;color:#e4e4e4;font-weight:400;transform:scaleX(0.9922)">#009dff</span>
<span class="t" id="t48" style="left:1265.86px;top:515.15px;font-size:14.2px;color:#d4d4d4;font-weight:400;transform:scaleX(0.9544)">OK</span>
<span class="t" id="t49" style="left:1355.55px;top:515.15px;font-size:14.2px;color:#d4d4d4;font-weight:400;transform:scaleX(0.9812)">Cancel</span>
</body></html>
